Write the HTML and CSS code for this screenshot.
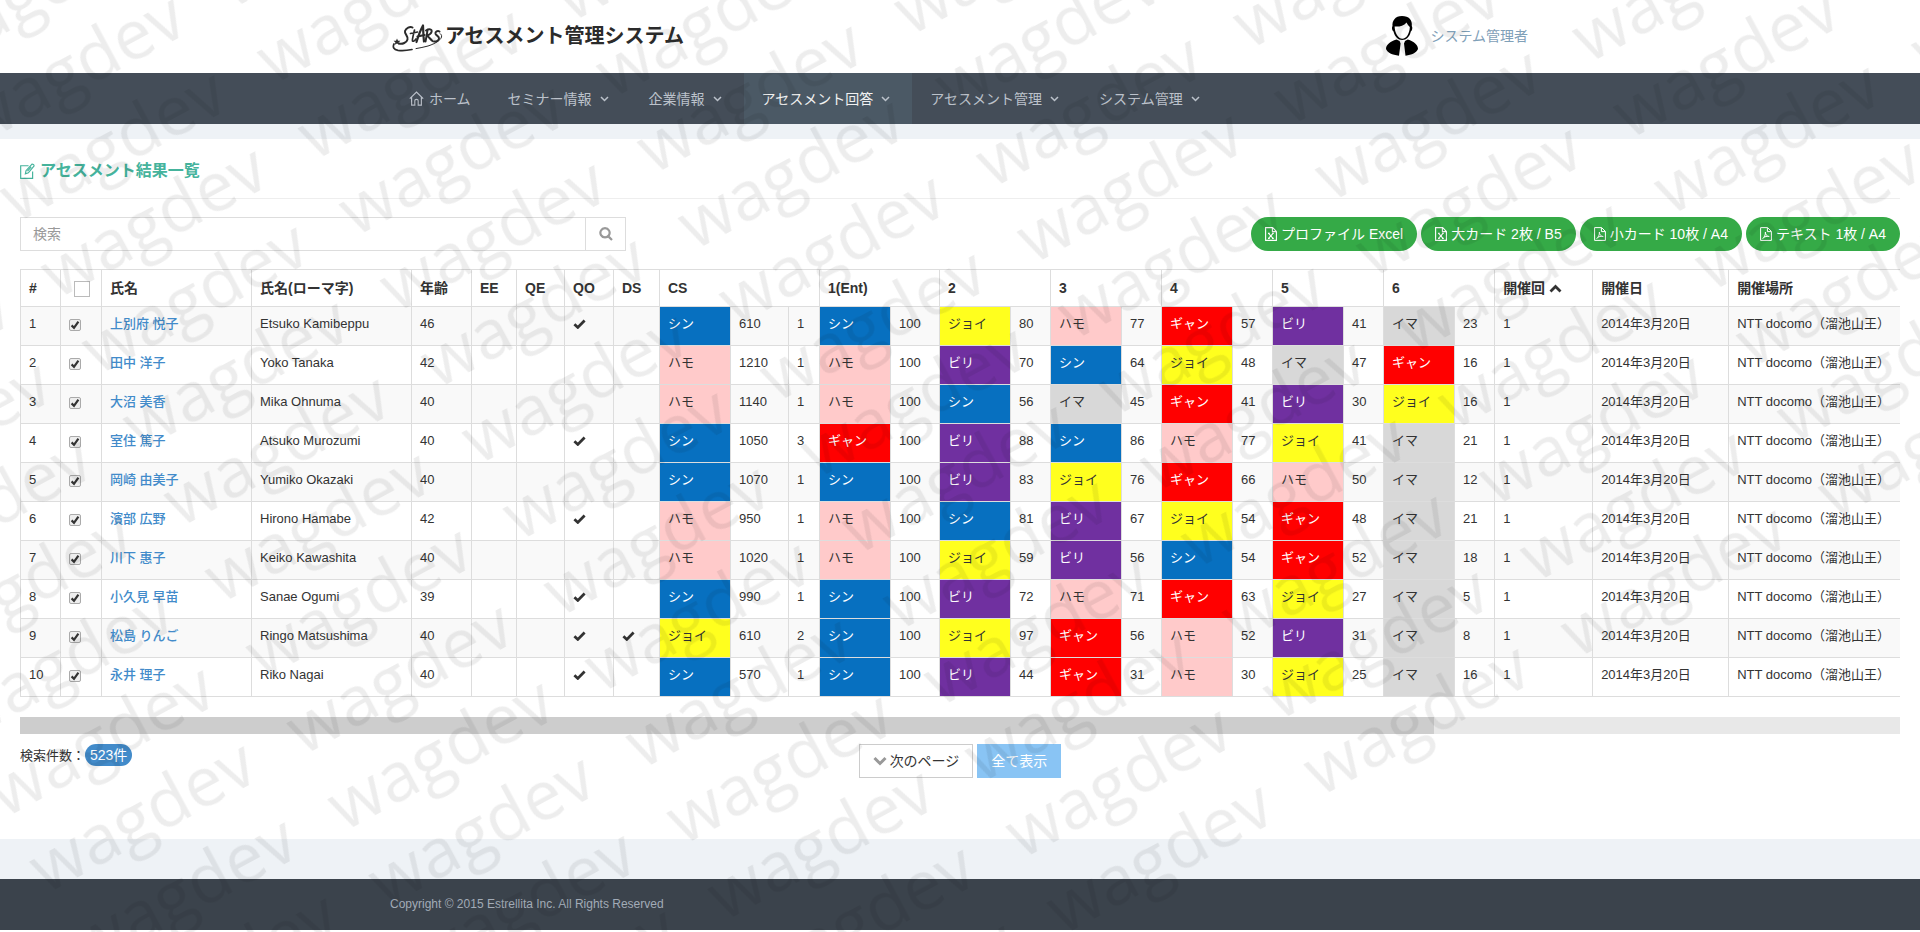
FILE: index.html
```html
<!DOCTYPE html>
<html lang="ja">
<head>
<meta charset="utf-8">
<title>アセスメント管理システム</title>
<link rel="stylesheet" href="styles.css">
</head>
<body>
<svg class="sprite" aria-hidden="true">
  <symbol id="i-down" viewBox="0 0 9 6"><path d="M1 1l3.5 3.5L8 1" fill="none" stroke="currentColor" stroke-width="1.5"/></symbol>
  <symbol id="i-check" viewBox="0 0 13 10"><path d="M1.4 5.2l3.4 3.2L11.6 1.6" fill="none" stroke="currentColor" stroke-width="2.8"/></symbol>
  <symbol id="i-tick" viewBox="0 0 10 10"><path d="M1.600 5.400l2.400 2.400L8.400 1.600" fill="none" stroke="currentColor" stroke-width="2.200"/></symbol>
  <symbol id="i-excel" viewBox="0 0 12 14"><path d="M.6.6h7l3.8 3.8v9H.6zM7.4.8v3.8h3.8M3.6 6.4l4.4 5M8 6.4l-4.4 5M3 6.4h1.8M7 6.4h1.8M3 11.4h1.8M7 11.4h1.8" fill="none" stroke="currentColor" stroke-width="1.1"/></symbol>
  <symbol id="i-pdf" viewBox="0 0 12 14"><path d="M.6.6h7l3.8 3.8v9H.6zM7.4.8v3.8h3.8M5.4 5c.2 3-1.2 5.600-2.800 6.800M5.400 5c-.2 2.600 1.800 4.600 4 4.600M3.400 10.400c1.600-.8 3.600-1.200 5.400-1" fill="none" stroke="currentColor"/></symbol>
</svg>

<header class="top">
  <div class="container top-inner">
    <a class="brand" href="#">
      <svg class="logo" viewBox="0 0 52 28" role="img" aria-label="STARS" fill="none" stroke="#2b2b2b" stroke-linecap="round" stroke-linejoin="round">
        <path d="M20.500 3.500c-2.500-1.500-6.500.5-7.500 3.500-.8 3 3.500 5 2.500 8.500-.8 3-5 5-8.500 4" stroke-width="2"/>
        <path d="M22.500 6c-.8 4-2.500 9-2 11 .8.8 2.500-.5 3.500-2M18.500 9.500l7-1.500" stroke-width="1.700"/>
        <path d="M24.500 18c1.500-5 4-12 6.500-16.500.2 5 .4 11 1 16M25.500 12.500l7-1.500" stroke-width="2.200"/>
        <path d="M35.500 6c-.5 4-1.300 8-2 11.500M34 6.500c3-2 6.500-1.500 5.500 1.500-.6 1.800-2.600 3-4.500 3.500 2 1.500 3.500 4 5.500 5.500" stroke-width="2"/>
        <path d="M47.500 7.500c-2-1.200-4.500.3-4 2.300.5 1.800 3.500 2.200 3.500 4.500 0 2-2.500 3.700-5 3.200" stroke-width="2"/>
        <path d="M48 9.500c5 3-1 9-12 12.500-4 1-8 2-12 2.600" stroke-width="1"/>
        <path d="M2 20c-1.500 3-.5 5.500 4 6.300 4 .6 9 .2 14-.8" stroke-width="1.700"/>
        <path d="M5 14.500l1 2.200 2.400.1-1.800 1.600.6 2.400L5 19.500l-2.200 1.300.6-2.400-1.800-1.600 2.400-.1z" fill="#2b2b2b" stroke="none"/>
      </svg>
      <span>アセスメント管理システム</span>
    </a>
    <a class="user" href="#">
      <svg class="avatar" viewBox="0 0 32 40" aria-hidden="true">
        <path d="M16 0C9 0 6 5 6.500 10c-1 1.500-.5 4.500 1 5.500C9 21 12 24 16.200 24s7.300-3 8.600-8.500c1.500-1 2-4 1-5.500C26.500 4 23 0 16 0z" fill="#000"/>
        <path d="M8.600 10.500c4 .5 9-.5 12-4 .8 2 2.400 3.500 3.200 4.500C23.800 17 20.500 22.800 16.300 22.800S8.900 17 8.600 10.500z" fill="#fff"/>
        <path d="M10.500 23.500C4 25.500 0 29 0 33c1.500 3.500 6 6 13 6.700l1.600-12.200-1-2.500zM21.800 23.500C28 25.500 32 29 32 33c-1.500 3.500-6 6-12.500 6.700L18 27.500l1-2.500z" fill="#000"/>
      </svg>
      <span>システム管理者</span>
    </a>
  </div>
</header>

<nav class="nav">
  <div class="container nav-inner">
    <a class="nav-item home" href="#"><svg class="i-home" viewBox="0 0 15 15" aria-hidden="true"><path d="M.8 7.600L7.500 1l6.700 6.600M2.600 6.200v8h3.200V9.800c0-2 3.400-2 3.400 0v4.400h3.200v-8" fill="none" stroke="currentColor" stroke-width="1.200"/></svg>ホーム</a>
    <a class="nav-item" href="#">セミナー情報<svg class="i-down"><use href="#i-down"/></svg></a>
    <a class="nav-item" href="#">企業情報<svg class="i-down"><use href="#i-down"/></svg></a>
    <a class="nav-item active" href="#">アセスメント回答<svg class="i-down"><use href="#i-down"/></svg></a>
    <a class="nav-item" href="#">アセスメント管理<svg class="i-down"><use href="#i-down"/></svg></a>
    <a class="nav-item" href="#">システム管理<svg class="i-down"><use href="#i-down"/></svg></a>
  </div>
</nav>

<main class="content">
  <h1 class="title">
    <svg class="i-edit" viewBox="0 0 14 15" aria-hidden="true"><path d="M8 2.600H.6v11.800h11.200V8M5 10.200l.6-3L11 1.200c.6-.6 2.600.8 2 1.700L7.800 9.200zM7 7.600l3.500-4" fill="none" stroke="currentColor" stroke-width="1.100"/></svg>
    アセスメント結果一覧
  </h1>

  <div class="toolbar">
    <form class="search">
      <input type="text" placeholder="検索" aria-label="検索">
      <button type="button" aria-label="検索する"><svg class="i-search" viewBox="0 0 14 14"><path d="M9.600 9.600l3.400 3.400M6 1.200a4.600 4.600 0 1 0 .01 0z" fill="none" stroke="currentColor" stroke-width="2.200"/></svg></button>
    </form>
    <div class="exports">
      <button type="button" class="pill"><svg class="i-file"><use href="#i-excel"/></svg>プロファイル Excel</button>
      <button type="button" class="pill"><svg class="i-file"><use href="#i-excel"/></svg>大カード 2枚 / B5</button>
      <button type="button" class="pill"><svg class="i-file"><use href="#i-pdf"/></svg>小カード 10枚 / A4</button>
      <button type="button" class="pill"><svg class="i-file"><use href="#i-pdf"/></svg>テキスト 1枚 / A4</button>
    </div>
  </div>

  <div class="table-wrap">
    <table class="results">
      <colgroup>
        <col class="w40"><col class="w41"><col class="w150"><col class="w160"><col class="w60"><col class="w45"><col class="w48"><col class="w49"><col class="w46">
        <col class="w71"><col class="w58"><col class="w31"><col class="w71"><col class="w49">
        <col class="w71"><col class="w40"><col class="w71"><col class="w40"><col class="w71"><col class="w40"><col class="w71"><col class="w40"><col class="w71"><col class="w40">
        <col class="w98"><col class="w136"><col>
      </colgroup>
      <thead>
        <tr><th>#</th><th class="pick"><input class="pick-all" type="checkbox" aria-label="すべて選択"></th><th>氏名</th><th>氏名(ローマ字)</th><th>年齢</th><th>EE</th><th>QE</th><th>QO</th><th>DS</th><th colspan="3">CS</th><th colspan="2">1(Ent)</th><th colspan="2">2</th><th colspan="2">3</th><th colspan="2">4</th><th colspan="2">5</th><th colspan="2">6</th><th>開催回 <svg class="i-sort" viewBox="0 0 13 9" aria-hidden="true"><path d="M1.500 7.500l5-5 5 5" fill="none" stroke="currentColor" stroke-width="2.800"/></svg></th><th>開催日</th><th>開催場所</th></tr>
      </thead>
      <tbody>
        <tr><td>1</td><td><span class="pick-row"><input type="checkbox" aria-label="1行目を選択" checked><svg class="i-tick"><use href="#i-tick"/></svg></span></td><td><a href="#">上別府 悦子</a></td><td>Etsuko Kamibeppu</td><td>46</td><td></td><td></td><td><svg class="i-check"><use href="#i-check"/></svg></td><td></td><td class="shin">シン</td><td>610</td><td>1</td><td class="shin">シン</td><td>100</td><td class="joy">ジョイ</td><td>80</td><td class="hamo">ハモ</td><td>77</td><td class="gyan">ギャン</td><td>57</td><td class="biri">ビリ</td><td>41</td><td class="ima">イマ</td><td>23</td><td>1</td><td>2014年3月20日</td><td>NTT docomo（溜池山王）</td></tr>
        <tr><td>2</td><td><span class="pick-row"><input type="checkbox" aria-label="2行目を選択" checked><svg class="i-tick"><use href="#i-tick"/></svg></span></td><td><a href="#">田中 洋子</a></td><td>Yoko Tanaka</td><td>42</td><td></td><td></td><td></td><td></td><td class="hamo">ハモ</td><td>1210</td><td>1</td><td class="hamo">ハモ</td><td>100</td><td class="biri">ビリ</td><td>70</td><td class="shin">シン</td><td>64</td><td class="joy">ジョイ</td><td>48</td><td class="ima">イマ</td><td>47</td><td class="gyan">ギャン</td><td>16</td><td>1</td><td>2014年3月20日</td><td>NTT docomo（溜池山王）</td></tr>
        <tr><td>3</td><td><span class="pick-row"><input type="checkbox" aria-label="3行目を選択" checked><svg class="i-tick"><use href="#i-tick"/></svg></span></td><td><a href="#">大沼 美香</a></td><td>Mika Ohnuma</td><td>40</td><td></td><td></td><td></td><td></td><td class="hamo">ハモ</td><td>1140</td><td>1</td><td class="hamo">ハモ</td><td>100</td><td class="shin">シン</td><td>56</td><td class="ima">イマ</td><td>45</td><td class="gyan">ギャン</td><td>41</td><td class="biri">ビリ</td><td>30</td><td class="joy">ジョイ</td><td>16</td><td>1</td><td>2014年3月20日</td><td>NTT docomo（溜池山王）</td></tr>
        <tr><td>4</td><td><span class="pick-row"><input type="checkbox" aria-label="4行目を選択" checked><svg class="i-tick"><use href="#i-tick"/></svg></span></td><td><a href="#">室住 篤子</a></td><td>Atsuko Murozumi</td><td>40</td><td></td><td></td><td><svg class="i-check"><use href="#i-check"/></svg></td><td></td><td class="shin">シン</td><td>1050</td><td>3</td><td class="gyan">ギャン</td><td>100</td><td class="biri">ビリ</td><td>88</td><td class="shin">シン</td><td>86</td><td class="hamo">ハモ</td><td>77</td><td class="joy">ジョイ</td><td>41</td><td class="ima">イマ</td><td>21</td><td>1</td><td>2014年3月20日</td><td>NTT docomo（溜池山王）</td></tr>
        <tr><td>5</td><td><span class="pick-row"><input type="checkbox" aria-label="5行目を選択" checked><svg class="i-tick"><use href="#i-tick"/></svg></span></td><td><a href="#">岡崎 由美子</a></td><td>Yumiko Okazaki</td><td>40</td><td></td><td></td><td></td><td></td><td class="shin">シン</td><td>1070</td><td>1</td><td class="shin">シン</td><td>100</td><td class="biri">ビリ</td><td>83</td><td class="joy">ジョイ</td><td>76</td><td class="gyan">ギャン</td><td>66</td><td class="hamo">ハモ</td><td>50</td><td class="ima">イマ</td><td>12</td><td>1</td><td>2014年3月20日</td><td>NTT docomo（溜池山王）</td></tr>
        <tr><td>6</td><td><span class="pick-row"><input type="checkbox" aria-label="6行目を選択" checked><svg class="i-tick"><use href="#i-tick"/></svg></span></td><td><a href="#">濱部 広野</a></td><td>Hirono Hamabe</td><td>42</td><td></td><td></td><td><svg class="i-check"><use href="#i-check"/></svg></td><td></td><td class="hamo">ハモ</td><td>950</td><td>1</td><td class="hamo">ハモ</td><td>100</td><td class="shin">シン</td><td>81</td><td class="biri">ビリ</td><td>67</td><td class="joy">ジョイ</td><td>54</td><td class="gyan">ギャン</td><td>48</td><td class="ima">イマ</td><td>21</td><td>1</td><td>2014年3月20日</td><td>NTT docomo（溜池山王）</td></tr>
        <tr><td>7</td><td><span class="pick-row"><input type="checkbox" aria-label="7行目を選択" checked><svg class="i-tick"><use href="#i-tick"/></svg></span></td><td><a href="#">川下 惠子</a></td><td>Keiko Kawashita</td><td>40</td><td></td><td></td><td></td><td></td><td class="hamo">ハモ</td><td>1020</td><td>1</td><td class="hamo">ハモ</td><td>100</td><td class="joy">ジョイ</td><td>59</td><td class="biri">ビリ</td><td>56</td><td class="shin">シン</td><td>54</td><td class="gyan">ギャン</td><td>52</td><td class="ima">イマ</td><td>18</td><td>1</td><td>2014年3月20日</td><td>NTT docomo（溜池山王）</td></tr>
        <tr><td>8</td><td><span class="pick-row"><input type="checkbox" aria-label="8行目を選択" checked><svg class="i-tick"><use href="#i-tick"/></svg></span></td><td><a href="#">小久見 早苗</a></td><td>Sanae Ogumi</td><td>39</td><td></td><td></td><td><svg class="i-check"><use href="#i-check"/></svg></td><td></td><td class="shin">シン</td><td>990</td><td>1</td><td class="shin">シン</td><td>100</td><td class="biri">ビリ</td><td>72</td><td class="hamo">ハモ</td><td>71</td><td class="gyan">ギャン</td><td>63</td><td class="joy">ジョイ</td><td>27</td><td class="ima">イマ</td><td>5</td><td>1</td><td>2014年3月20日</td><td>NTT docomo（溜池山王）</td></tr>
        <tr><td>9</td><td><span class="pick-row"><input type="checkbox" aria-label="9行目を選択" checked><svg class="i-tick"><use href="#i-tick"/></svg></span></td><td><a href="#">松島 りんご</a></td><td>Ringo Matsushima</td><td>40</td><td></td><td></td><td><svg class="i-check"><use href="#i-check"/></svg></td><td><svg class="i-check"><use href="#i-check"/></svg></td><td class="joy">ジョイ</td><td>610</td><td>2</td><td class="shin">シン</td><td>100</td><td class="joy">ジョイ</td><td>97</td><td class="gyan">ギャン</td><td>56</td><td class="hamo">ハモ</td><td>52</td><td class="biri">ビリ</td><td>31</td><td class="ima">イマ</td><td>8</td><td>1</td><td>2014年3月20日</td><td>NTT docomo（溜池山王）</td></tr>
        <tr><td>10</td><td><span class="pick-row"><input type="checkbox" aria-label="10行目を選択" checked><svg class="i-tick"><use href="#i-tick"/></svg></span></td><td><a href="#">永井 理子</a></td><td>Riko Nagai</td><td>40</td><td></td><td></td><td><svg class="i-check"><use href="#i-check"/></svg></td><td></td><td class="shin">シン</td><td>570</td><td>1</td><td class="shin">シン</td><td>100</td><td class="biri">ビリ</td><td>44</td><td class="gyan">ギャン</td><td>31</td><td class="hamo">ハモ</td><td>30</td><td class="joy">ジョイ</td><td>25</td><td class="ima">イマ</td><td>16</td><td>1</td><td>2014年3月20日</td><td>NTT docomo（溜池山王）</td></tr>
      </tbody>
    </table>
  </div>
  <div class="scroll-track"><div class="scroll-thumb"></div></div>

  <div class="pager">
    <p class="count">検索件数：<span class="badge">523件</span></p>
    <div class="pager-buttons">
      <button type="button" class="btn"><svg class="i-next" viewBox="0 0 14 10" aria-hidden="true"><path d="M1.500 2l5.500 5.500L12.500 2" fill="none" stroke="currentColor" stroke-width="3"/></svg>次のページ</button>
      <button type="button" class="btn primary">全て表示</button>
    </div>
  </div>
</main>

<footer class="footer">
  <div class="container">Copyright © 2015 Estrellita Inc. All Rights Reserved</div>
</footer>

<svg class="watermark" aria-hidden="true">
  <defs>
    <pattern id="wm" x="0" y="-60" width="292" height="86.400" patternUnits="userSpaceOnUse">
      <text class="wm-text" x="0" y="60">wagdev</text>
    </pattern>
  </defs>
  <g transform="translate(1063 936) rotate(-28.300)">
    <rect x="-2920" y="-2600" width="5840" height="2626" fill="url(#wm)"/>
  </g>
</svg>
</body>
</html>
```
FILE: styles.css
```css
* { box-sizing: border-box; }

body {
  margin: 0;
  position: relative;
  overflow-x: hidden;
  background: #fff;
  color: #333;
  font: 14px/20px "Liberation Sans", "Noto Sans CJK JP", sans-serif;
}

a { text-decoration: none; }
button, input { font: inherit; }
.sprite { display: none; }

.container {
  width: 100%;
  max-width: 1170px;
  margin: 0 auto;
  padding: 0 15px;
}

/* Header */
.top-inner {
  display: flex;
  align-items: center;
  justify-content: space-between;
  height: 73px;
}
.brand {
  display: flex;
  align-items: center;
  gap: 1px;
  color: #2b2b2b;
  font-size: 20px;
  font-weight: bold;
  line-height: 28px;
  padding: 0 0 2px 2px;
}
.logo { width: 52px; height: 28px; margin-top: 4px; }
.user {
  display: flex;
  align-items: center;
  gap: 12px;
  color: #7fa0b8;
  margin-right: 2px;
  padding-bottom: 2px;
}
.avatar { width: 32px; height: 40px; }

/* Navigation */
.nav { background: #444d58; }
.nav-inner { display: flex; }
.nav-item {
  display: flex;
  align-items: center;
  height: 51px;
  padding: 0 22px 0 18px;
  color: #bcc2cb;
}
.nav-item.home { padding: 0 19px; }
.nav-item.active { background: #4b5965; color: #f1f1f1; }
.i-home { width: 15px; height: 15px; margin-right: 5px; }
.i-down { width: 9px; height: 6px; margin-left: 8px; color: #bcc2cb; }

/* Page content */
.content {
  border-top: 15px solid #eef2f6;
  border-bottom: 40px solid #eef2f6;
  padding: 0 20px 61px;
}
.title {
  display: flex;
  align-items: center;
  gap: 5px;
  height: 60px;
  margin: 0 0 18px;
  padding-top: 4px;
  border-bottom: 1px solid #eee;
  color: #45b39c;
  font-size: 16px;
  font-weight: bold;
}
.i-edit { width: 15px; height: 16px; }

.toolbar {
  display: flex;
  justify-content: space-between;
  margin-bottom: 18px;
}
.search {
  display: flex;
  width: 606px;
  height: 34px;
  border: 1px solid #ddd;
}
.search input {
  flex: 1;
  min-width: 0;
  border: 0;
  padding: 0 12px;
  outline: 0;
}
.search input::placeholder { color: #999; }
.search button {
  width: 40px;
  border: 0;
  border-left: 1px solid #ddd;
  background: #fff;
  color: #999;
  padding: 0;
}
.i-search { display: block; width: 14px; height: 14px; margin: auto; }

.exports { display: flex; gap: 4px; }
.pill {
  display: flex;
  align-items: center;
  gap: 4px;
  height: 34px;
  padding: 0 14px;
  border: 0;
  border-radius: 17px;
  background: #35aa47;
  color: #fff;
  white-space: nowrap;
}
.i-file { width: 12px; height: 14px; }

/* Results table */
.table-wrap { overflow: hidden; margin-bottom: 20px; }
.results {
  width: 2500px;
  table-layout: fixed;
  border-collapse: collapse;
  font-size: 13px;
  line-height: 18px;
}
.results th, .results td {
  border: 1px solid #ddd;
  padding: 8px;
  text-align: left;
  vertical-align: top;
  white-space: nowrap;
}
.results th { height: 37px; font-size: 14px; line-height: 20px; }
.results td { height: 39px; }
.results tbody tr:nth-child(odd) { background: #f9f9f9; }
.results a { color: #428bca; font-weight: 500; }
.results .pick { padding-left: 13px; }
.results .shin { background: #0770c0; color: #fff; }
.results .hamo { background: #ffcaca; }
.results .gyan { background: #f00; color: #fff; }
.results .joy { background: #ffff1e; }
.results .biri { background: #7030a0; color: #fff; }
.results .ima { background: #d8d8d8; }

.w31 { width: 31px; }
.w40 { width: 40px; }
.w41 { width: 41px; }
.w45 { width: 45px; }
.w46 { width: 46px; }
.w48 { width: 48px; }
.w49 { width: 49px; }
.w58 { width: 58px; }
.w60 { width: 60px; }
.w71 { width: 71px; }
.w98 { width: 98px; }
.w136 { width: 136px; }
.w150 { width: 150px; }
.w160 { width: 160px; }

.pick-all {
  appearance: none;
  display: block;
  width: 16px;
  height: 16px;
  margin: 3px 0 0;
  border: 1px solid #bbb;
  background: #fff;
}

/* Row checkbox: the tick shares one grid cell with the input */
.pick-row { display: grid; width: 12px; margin-top: 4px; }
.pick-row > * { grid-area: 1 / 1; }
.pick-row input {
  appearance: none;
  width: 12px;
  height: 12px;
  margin: 0;
  border: 1px solid #aaa;
  border-radius: 2px;
  background: #eee;
}
.i-tick {
  width: 10px;
  height: 10px;
  place-self: center;
  pointer-events: none;
  visibility: hidden;
}
.pick-row input:checked + .i-tick { visibility: visible; }

.i-check { display: block; width: 13px; height: 10px; margin-top: 4px; }
.i-sort { width: 13px; height: 9px; }

.scroll-track { height: 17px; background: #e8e8e8; }
.scroll-thumb { width: calc(75% + 4px); height: 17px; background: #cdcdcd; }

/* Pager */
.pager {
  display: grid;
  grid-template-columns: 1fr auto 1fr;
  margin-top: 10px;
}
.count { margin: 0; font-size: 13px; line-height: 20px; }
.badge {
  display: inline-block;
  padding: 0 5px;
  border-radius: 11px;
  background: #428bca;
  color: #fff;
  font-size: 14px;
  line-height: 22px;
}
.pager-buttons { display: flex; gap: 4px; }
.btn {
  display: flex;
  align-items: center;
  gap: 3px;
  height: 34px;
  padding: 0 13px;
  border: 1px solid #ccc;
  background: #fff;
  color: #333;
}
.btn.primary { border-color: #89c4f4; background: #89c4f4; color: #fff; }
.i-next { width: 14px; height: 10px; color: #999; }

.footer {
  background: #3b434c;
  color: #a2abb7;
  font-size: 12px;
  line-height: 18px;
  padding: 16px 0 17px;
  margin-bottom: 2px;
}

/* Tiled text laid over the page */
.watermark {
  position: absolute;
  top: 0;
  left: 0;
  width: 100%;
  height: 100%;
  pointer-events: none;
}
.wm-text {
  font: 400 69px "Open Sans", sans-serif;
  fill: #000;
  fill-opacity: 0.07;
}
```
